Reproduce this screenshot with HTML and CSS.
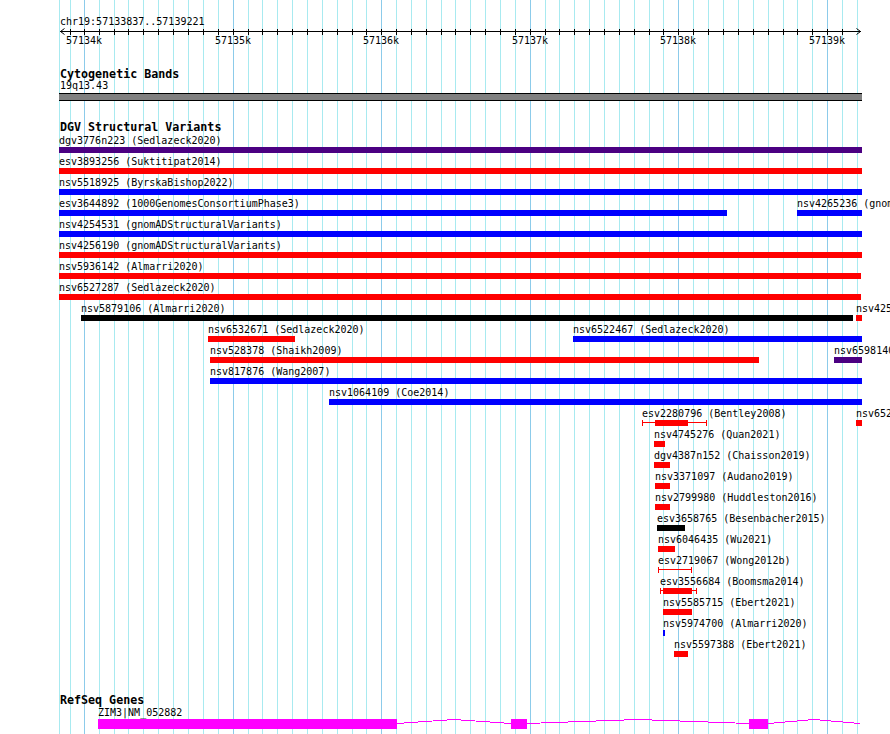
FILE: index.html
```html
<!DOCTYPE html>
<html lang="en">
<head>
<meta charset="utf-8">
<title>chr19:57133837..57139221</title>
<link rel="stylesheet" href="styles.css">
</head>
<body>
<div class="browser">
  <svg class="grid" width="890" height="734" viewBox="0 0 890 734" shape-rendering="crispEdges" aria-hidden="true">
    <g class="minor">
      <rect x="59" y="0" width="1" height="734"/><rect x="70" y="0" width="1" height="734"/>
      <rect x="99" y="0" width="1" height="734"/><rect x="114" y="0" width="1" height="734"/>
      <rect x="128" y="0" width="1" height="734"/><rect x="143" y="0" width="1" height="734"/>
      <rect x="158" y="0" width="1" height="734"/><rect x="173" y="0" width="1" height="734"/>
      <rect x="188" y="0" width="1" height="734"/><rect x="203" y="0" width="1" height="734"/>
      <rect x="218" y="0" width="1" height="734"/><rect x="248" y="0" width="1" height="734"/>
      <rect x="262" y="0" width="1" height="734"/><rect x="277" y="0" width="1" height="734"/>
      <rect x="292" y="0" width="1" height="734"/><rect x="307" y="0" width="1" height="734"/>
      <rect x="322" y="0" width="1" height="734"/><rect x="337" y="0" width="1" height="734"/>
      <rect x="352" y="0" width="1" height="734"/><rect x="366" y="0" width="1" height="734"/>
      <rect x="396" y="0" width="1" height="734"/><rect x="411" y="0" width="1" height="734"/>
      <rect x="426" y="0" width="1" height="734"/><rect x="441" y="0" width="1" height="734"/>
      <rect x="455" y="0" width="1" height="734"/><rect x="470" y="0" width="1" height="734"/>
      <rect x="485" y="0" width="1" height="734"/><rect x="500" y="0" width="1" height="734"/>
      <rect x="515" y="0" width="1" height="734"/><rect x="545" y="0" width="1" height="734"/>
      <rect x="559" y="0" width="1" height="734"/><rect x="574" y="0" width="1" height="734"/>
      <rect x="589" y="0" width="1" height="734"/><rect x="604" y="0" width="1" height="734"/>
      <rect x="619" y="0" width="1" height="734"/><rect x="634" y="0" width="1" height="734"/>
      <rect x="649" y="0" width="1" height="734"/><rect x="663" y="0" width="1" height="734"/>
      <rect x="693" y="0" width="1" height="734"/><rect x="708" y="0" width="1" height="734"/>
      <rect x="723" y="0" width="1" height="734"/><rect x="738" y="0" width="1" height="734"/>
      <rect x="753" y="0" width="1" height="734"/><rect x="768" y="0" width="1" height="734"/>
      <rect x="783" y="0" width="1" height="734"/><rect x="797" y="0" width="1" height="734"/>
      <rect x="812" y="0" width="1" height="734"/><rect x="842" y="0" width="1" height="734"/>
      <rect x="857" y="0" width="1" height="734"/>
    </g>
    <g class="major">
      <rect x="84" y="0" width="1" height="734"/><rect x="233" y="0" width="1" height="734"/>
      <rect x="381" y="0" width="1" height="734"/><rect x="530" y="0" width="1" height="734"/>
      <rect x="678" y="0" width="1" height="734"/><rect x="827" y="0" width="1" height="734"/>
    </g>
  </svg>

  <div class="content">
    <div class="loc">chr19:57133837..57139221</div>

    <div class="ruler">
      <svg class="axis" width="890" height="20" viewBox="0 0 890 20" aria-hidden="true">
        <line x1="60" y1="3.5" x2="861" y2="3.5" shape-rendering="crispEdges"/>
        <polyline points="64.5,0.5 60.5,3.5 64.5,6.5"/>
        <polyline points="856.5,0.5 860.5,3.5 856.5,6.5"/>
        <g shape-rendering="crispEdges">
          <path d="M70.5 1V7M84.5 1V7M99.5 1V7M114.5 1V7M128.5 1V7M143.5 1V7M158.5 1V7M173.5 1V7M188.5 1V7M203.5 1V7M218.5 1V7M233.5 1V7M248.5 1V7M262.5 1V7M277.5 1V7M292.5 1V7M307.5 1V7M322.5 1V7M337.5 1V7M352.5 1V7M366.5 1V7M381.5 1V7M396.5 1V7M411.5 1V7M426.5 1V7M441.5 1V7M455.5 1V7M470.5 1V7M485.5 1V7M500.5 1V7M515.5 1V7M530.5 1V7M545.5 1V7M559.5 1V7M574.5 1V7M589.5 1V7M604.5 1V7M619.5 1V7M634.5 1V7M649.5 1V7M663.5 1V7M678.5 1V7M693.5 1V7M708.5 1V7M723.5 1V7M738.5 1V7M753.5 1V7M768.5 1V7M783.5 1V7M797.5 1V7M812.5 1V7M827.5 1V7M842.5 1V7"/>
        </g>
      </svg>
      <span class="tick-label" style="left:66px">57134k</span>
      <span class="tick-label" style="left:215px">57135k</span>
      <span class="tick-label" style="left:363px">57136k</span>
      <span class="tick-label" style="left:512px">57137k</span>
      <span class="tick-label" style="left:660px">57138k</span>
      <span class="tick-label" style="left:809px">57139k</span>
    </div>

    <section class="track cyto">
      <h2 class="track-title">Cytogenetic Bands</h2>
      <div class="band-label">19q13.43</div>
      <div class="band"></div>
    </section>

    <section class="track dgv">
      <h2 class="track-title">DGV Structural Variants</h2>
      <div class="rows">
        <div class="row">
          <div class="feat" style="left:59px;width:803px"><span class="lbl">dgv3776n223 (Sedlazeck2020)</span><div class="bar purple"></div></div>
        </div>
        <div class="row">
          <div class="feat" style="left:59px;width:803px"><span class="lbl">esv3893256 (Suktitipat2014)</span><div class="bar red"></div></div>
        </div>
        <div class="row">
          <div class="feat" style="left:59px;width:803px"><span class="lbl">nsv5518925 (ByrskaBishop2022)</span><div class="bar blue"></div></div>
        </div>
        <div class="row">
          <div class="feat" style="left:59px;width:668px"><span class="lbl">esv3644892 (1000GenomesConsortiumPhase3)</span><div class="bar blue"></div></div>
          <div class="feat" style="left:797px;width:65px"><span class="lbl">nsv4265236 (gnomADStructuralVariants)</span><div class="bar blue"></div></div>
        </div>
        <div class="row">
          <div class="feat" style="left:59px;width:803px"><span class="lbl">nsv4254531 (gnomADStructuralVariants)</span><div class="bar blue"></div></div>
        </div>
        <div class="row">
          <div class="feat" style="left:59px;width:803px"><span class="lbl">nsv4256190 (gnomADStructuralVariants)</span><div class="bar red"></div></div>
        </div>
        <div class="row">
          <div class="feat" style="left:59px;width:802px"><span class="lbl">nsv5936142 (Almarri2020)</span><div class="bar red"></div></div>
        </div>
        <div class="row">
          <div class="feat" style="left:59px;width:802px"><span class="lbl">nsv6527287 (Sedlazeck2020)</span><div class="bar red"></div></div>
        </div>
        <div class="row">
          <div class="feat" style="left:81px;width:772px"><span class="lbl">nsv5879106 (Almarri2020)</span><div class="bar black"></div></div>
          <div class="feat" style="left:856px;width:6px"><span class="lbl">nsv425</span><div class="bar red"></div></div>
        </div>
        <div class="row">
          <div class="feat" style="left:208px;width:87px"><span class="lbl">nsv6532671 (Sedlazeck2020)</span><div class="bar red"></div></div>
          <div class="feat" style="left:573px;width:289px"><span class="lbl">nsv6522467 (Sedlazeck2020)</span><div class="bar blue"></div></div>
        </div>
        <div class="row">
          <div class="feat" style="left:210px;width:549px"><span class="lbl">nsv528378 (Shaikh2009)</span><div class="bar red"></div></div>
          <div class="feat" style="left:834px;width:28px"><span class="lbl">nsv6598140</span><div class="bar purple"></div></div>
        </div>
        <div class="row">
          <div class="feat" style="left:210px;width:652px"><span class="lbl">nsv817876 (Wang2007)</span><div class="bar blue"></div></div>
        </div>
        <div class="row">
          <div class="feat" style="left:329px;width:533px"><span class="lbl">nsv1064109 (Coe2014)</span><div class="bar blue"></div></div>
        </div>
        <div class="row">
          <div class="feat" style="left:642px;width:65px"><span class="lbl">esv2280796 (Bentley2008)</span><div class="whisker"><div class="thick" style="left:12px;width:33px"></div></div></div>
          <div class="feat" style="left:856px;width:6px"><span class="lbl">nsv652</span><div class="bar red"></div></div>
        </div>
        <div class="row">
          <div class="feat" style="left:654px;width:11px"><span class="lbl">nsv4745276 (Quan2021)</span><div class="bar red"></div></div>
        </div>
        <div class="row">
          <div class="feat" style="left:654px;width:16px"><span class="lbl">dgv4387n152 (Chaisson2019)</span><div class="bar red"></div></div>
        </div>
        <div class="row">
          <div class="feat" style="left:655px;width:15px"><span class="lbl">nsv3371097 (Audano2019)</span><div class="bar red"></div></div>
        </div>
        <div class="row">
          <div class="feat" style="left:655px;width:15px"><span class="lbl">nsv2799980 (Huddleston2016)</span><div class="bar red"></div></div>
        </div>
        <div class="row">
          <div class="feat" style="left:657px;width:28px"><span class="lbl">esv3658765 (Besenbacher2015)</span><div class="bar black"></div></div>
        </div>
        <div class="row">
          <div class="feat" style="left:658px;width:17px"><span class="lbl">nsv6046435 (Wu2021)</span><div class="bar red"></div></div>
        </div>
        <div class="row">
          <div class="feat" style="left:658px;width:34px"><span class="lbl">esv2719067 (Wong2012b)</span><div class="whisker"></div></div>
        </div>
        <div class="row">
          <div class="feat" style="left:660px;width:37px"><span class="lbl">esv3556684 (Boomsma2014)</span><div class="whisker"><div class="thick" style="left:2px;width:29px"></div></div></div>
        </div>
        <div class="row">
          <div class="feat" style="left:663px;width:29px"><span class="lbl">nsv5585715 (Ebert2021)</span><div class="bar red"></div></div>
        </div>
        <div class="row">
          <div class="feat" style="left:663px;width:2px"><span class="lbl">nsv5974700 (Almarri2020)</span><div class="bar blue"></div></div>
        </div>
        <div class="row">
          <div class="feat" style="left:674px;width:14px"><span class="lbl">nsv5597388 (Ebert2021)</span><div class="bar red"></div></div>
        </div>
      </div>
    </section>

    <section class="track refseq">
      <h2 class="track-title">RefSeq Genes</h2>
      <div class="gene-row">
        <div class="feat gene" style="left:98px;width:762px">
          <span class="lbl gene-lbl">ZIM3|NM_052882</span>
          <svg class="gene-model" width="762" height="10" viewBox="0 0 762 10" shape-rendering="crispEdges" aria-hidden="true">
            <rect x="0" y="0" width="299" height="10"/>
            <polyline points="299,4.5 356,0.5 413,4.5"/>
            <rect x="413" y="0" width="16" height="10"/>
            <polyline points="429,4.5 540,0.5 651,4.5"/>
            <rect x="651" y="0" width="19" height="10"/>
            <polyline points="670,4.5 716,0.5 762,4.5"/>
          </svg>
        </div>
      </div>
    </section>
  </div>
</div>
</body>
</html>
```

FILE: styles.css
```css
html, body {
  margin: 0;
  padding: 0;
  background: #ffffff;
  overflow: hidden;
}

.browser {
  position: relative;
  width: 890px;
  height: 734px;
  overflow: hidden;
  background: #ffffff;
  font-family: "DejaVu Sans Mono", "Liberation Mono", monospace;
  font-size: 10px;
  color: #000000;
}

.grid {
  position: absolute;
  left: 0;
  top: 0;
  z-index: 0;
}

.grid .minor rect { fill: #a8eaf0; }
.grid .major rect { fill: #8ccbea; }

.content {
  position: relative;
  z-index: 1;
  padding-top: 16px;
}

.loc {
  padding-left: 60px;
  line-height: 12px;
  white-space: nowrap;
}

.ruler {
  position: relative;
  height: 20px;
}

.axis {
  display: block;
}

.axis line,
.axis polyline,
.axis path {
  stroke: #000000;
  stroke-width: 1;
  fill: none;
}

.tick-label {
  position: absolute;
  top: 7px;
  line-height: 12px;
  white-space: nowrap;
}

.track-title {
  margin: 0;
  padding: 0 0 2px 60px;
  font-size: 11.67px;
  font-weight: bold;
  line-height: 10px;
  white-space: nowrap;
}

.cyto {
  margin-top: 21px;
}

.band-label {
  padding: 0 0 2px 60px;
  line-height: 10px;
}

.band {
  margin-left: 59px;
  width: 803px;
  height: 6px;
  background: #808080;
  border-top: 1px solid #000000;
  border-bottom: 1px solid #000000;
}

.dgv {
  margin-top: 21px;
}

.row {
  position: relative;
  height: 21px;
}

.feat {
  position: absolute;
  top: 0;
}

.lbl {
  display: block;
  line-height: 13px;
  height: 13px;
  white-space: nowrap;
}

.bar {
  height: 6px;
}

.bar.red { background: #ff0000; }
.bar.blue { background: #0000ff; }
.bar.purple { background: #4b0082; }
.bar.black { background: #000000; }

.whisker {
  position: relative;
  height: 6px;
  box-sizing: border-box;
  border-left: 1px solid #ff0000;
  border-right: 1px solid #ff0000;
  background: linear-gradient(#ff0000, #ff0000) 0 2px / 100% 1px no-repeat;
}

.whisker .thick {
  position: absolute;
  top: 0;
  height: 6px;
  background: #ff0000;
}

.refseq {
  margin-top: 36px;
}

.gene-row {
  position: relative;
  height: 22px;
}

.gene-lbl {
  line-height: 12px;
  height: 12px;
}

.gene-model {
  display: block;
}

.gene-model rect { fill: #ff00ff; }

.gene-model polyline {
  fill: none;
  stroke: #ff00ff;
  stroke-width: 1;
}
```
